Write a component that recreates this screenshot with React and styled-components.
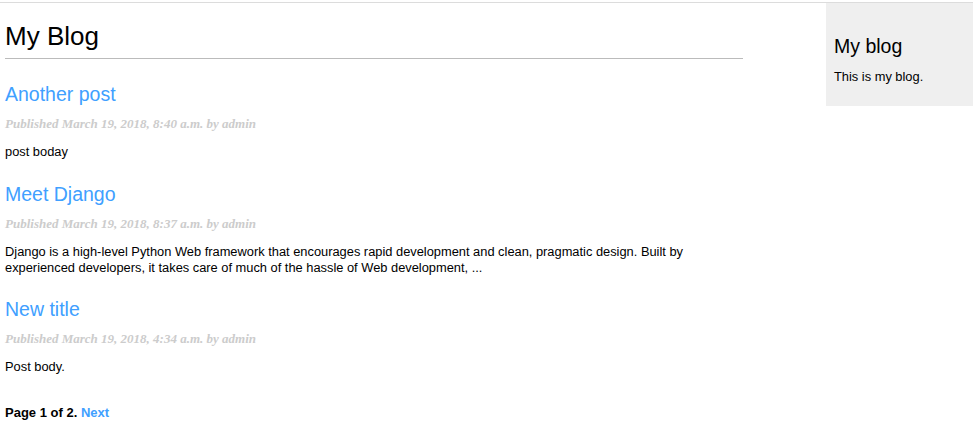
import React from "react";
import styled, { createGlobalStyle } from "styled-components";

const Global = createGlobalStyle`
  html, body { margin: 0; padding: 0; background: #fff; }
  body {
    font-family: "Liberation Sans", Helvetica, Arial, sans-serif;
    color: #000;
    padding-top: 2px;
  }
`;

const Page = styled.div`
  border-top: 1px solid #dcdcdc;
  display: flex;
  justify-content: space-between;
  align-items: flex-start;
`;

const Content = styled.main`
  width: 738px;
  padding-left: 5px;
`;

const Title = styled.h1`
  font-size: 26px;
  line-height: 30px;
  font-weight: normal;
  margin: 18px 0 0;
  padding-bottom: 7px;
  border-bottom: 1px solid #bbb;
`;

const Link = styled.a`
  color: #40a0ff;
  text-decoration: none;
`;

const Post = styled.article`
  margin-top: ${(p) => p.$gap}px;
`;

const PostTitle = styled.h2`
  font-size: 19.5px;
  line-height: 22px;
  font-weight: normal;
  margin: 0;
`;

const DateLine = styled.p`
  font-family: "Liberation Serif", Georgia, serif;
  font-style: italic;
  font-weight: bold;
  font-size: 13px;
  line-height: 14px;
  color: #ccc;
  margin: 12px 0 0;
`;

const Body = styled.p`
  font-size: 12.85px;
  line-height: 16px;
  margin: 13px 0 0;
`;

const Pagination = styled.div`
  font-size: 13px;
  line-height: 16px;
  font-weight: bold;
  margin-top: 30px;
`;

const Sidebar = styled.aside`
  width: 147px;
  height: 103px;
  box-sizing: border-box;
  background: #efefef;
  padding: 32px 8px 0;
`;

const SideTitle = styled.h2`
  font-size: 19.5px;
  line-height: 22px;
  font-weight: normal;
  margin: 0;
`;

const SideText = styled.p`
  font-size: 12.85px;
  line-height: 16px;
  margin: 12px 0 0;
`;

const posts = [
  {
    title: "Another post",
    date: "Published March 19, 2018, 8:40 a.m. by admin",
    body: "post boday",
    gap: 24,
  },
  {
    title: "Meet Django",
    date: "Published March 19, 2018, 8:37 a.m. by admin",
    body:
      "Django is a high-level Python Web framework that encourages rapid development and clean, pragmatic design. Built by experienced developers, it takes care of much of the hassle of Web development, ...",
    gap: 23,
  },
  {
    title: "New title",
    date: "Published March 19, 2018, 4:34 a.m. by admin",
    body: "Post body.",
    gap: 22,
  },
];

export default function App() {
  return (
    <>
      <Global />
      <Page>
        <Content>
          <Title>My Blog</Title>
          {posts.map((p) => (
            <Post key={p.title} $gap={p.gap}>
              <PostTitle>
                <Link href="#">{p.title}</Link>
              </PostTitle>
              <DateLine>{p.date}</DateLine>
              <Body>{p.body}</Body>
            </Post>
          ))}
          <Pagination>
            Page 1 of 2. <Link href="#">Next</Link>
          </Pagination>
        </Content>
        <Sidebar>
          <SideTitle>My blog</SideTitle>
          <SideText>This is my blog.</SideText>
        </Sidebar>
      </Page>
    </>
  );
}
